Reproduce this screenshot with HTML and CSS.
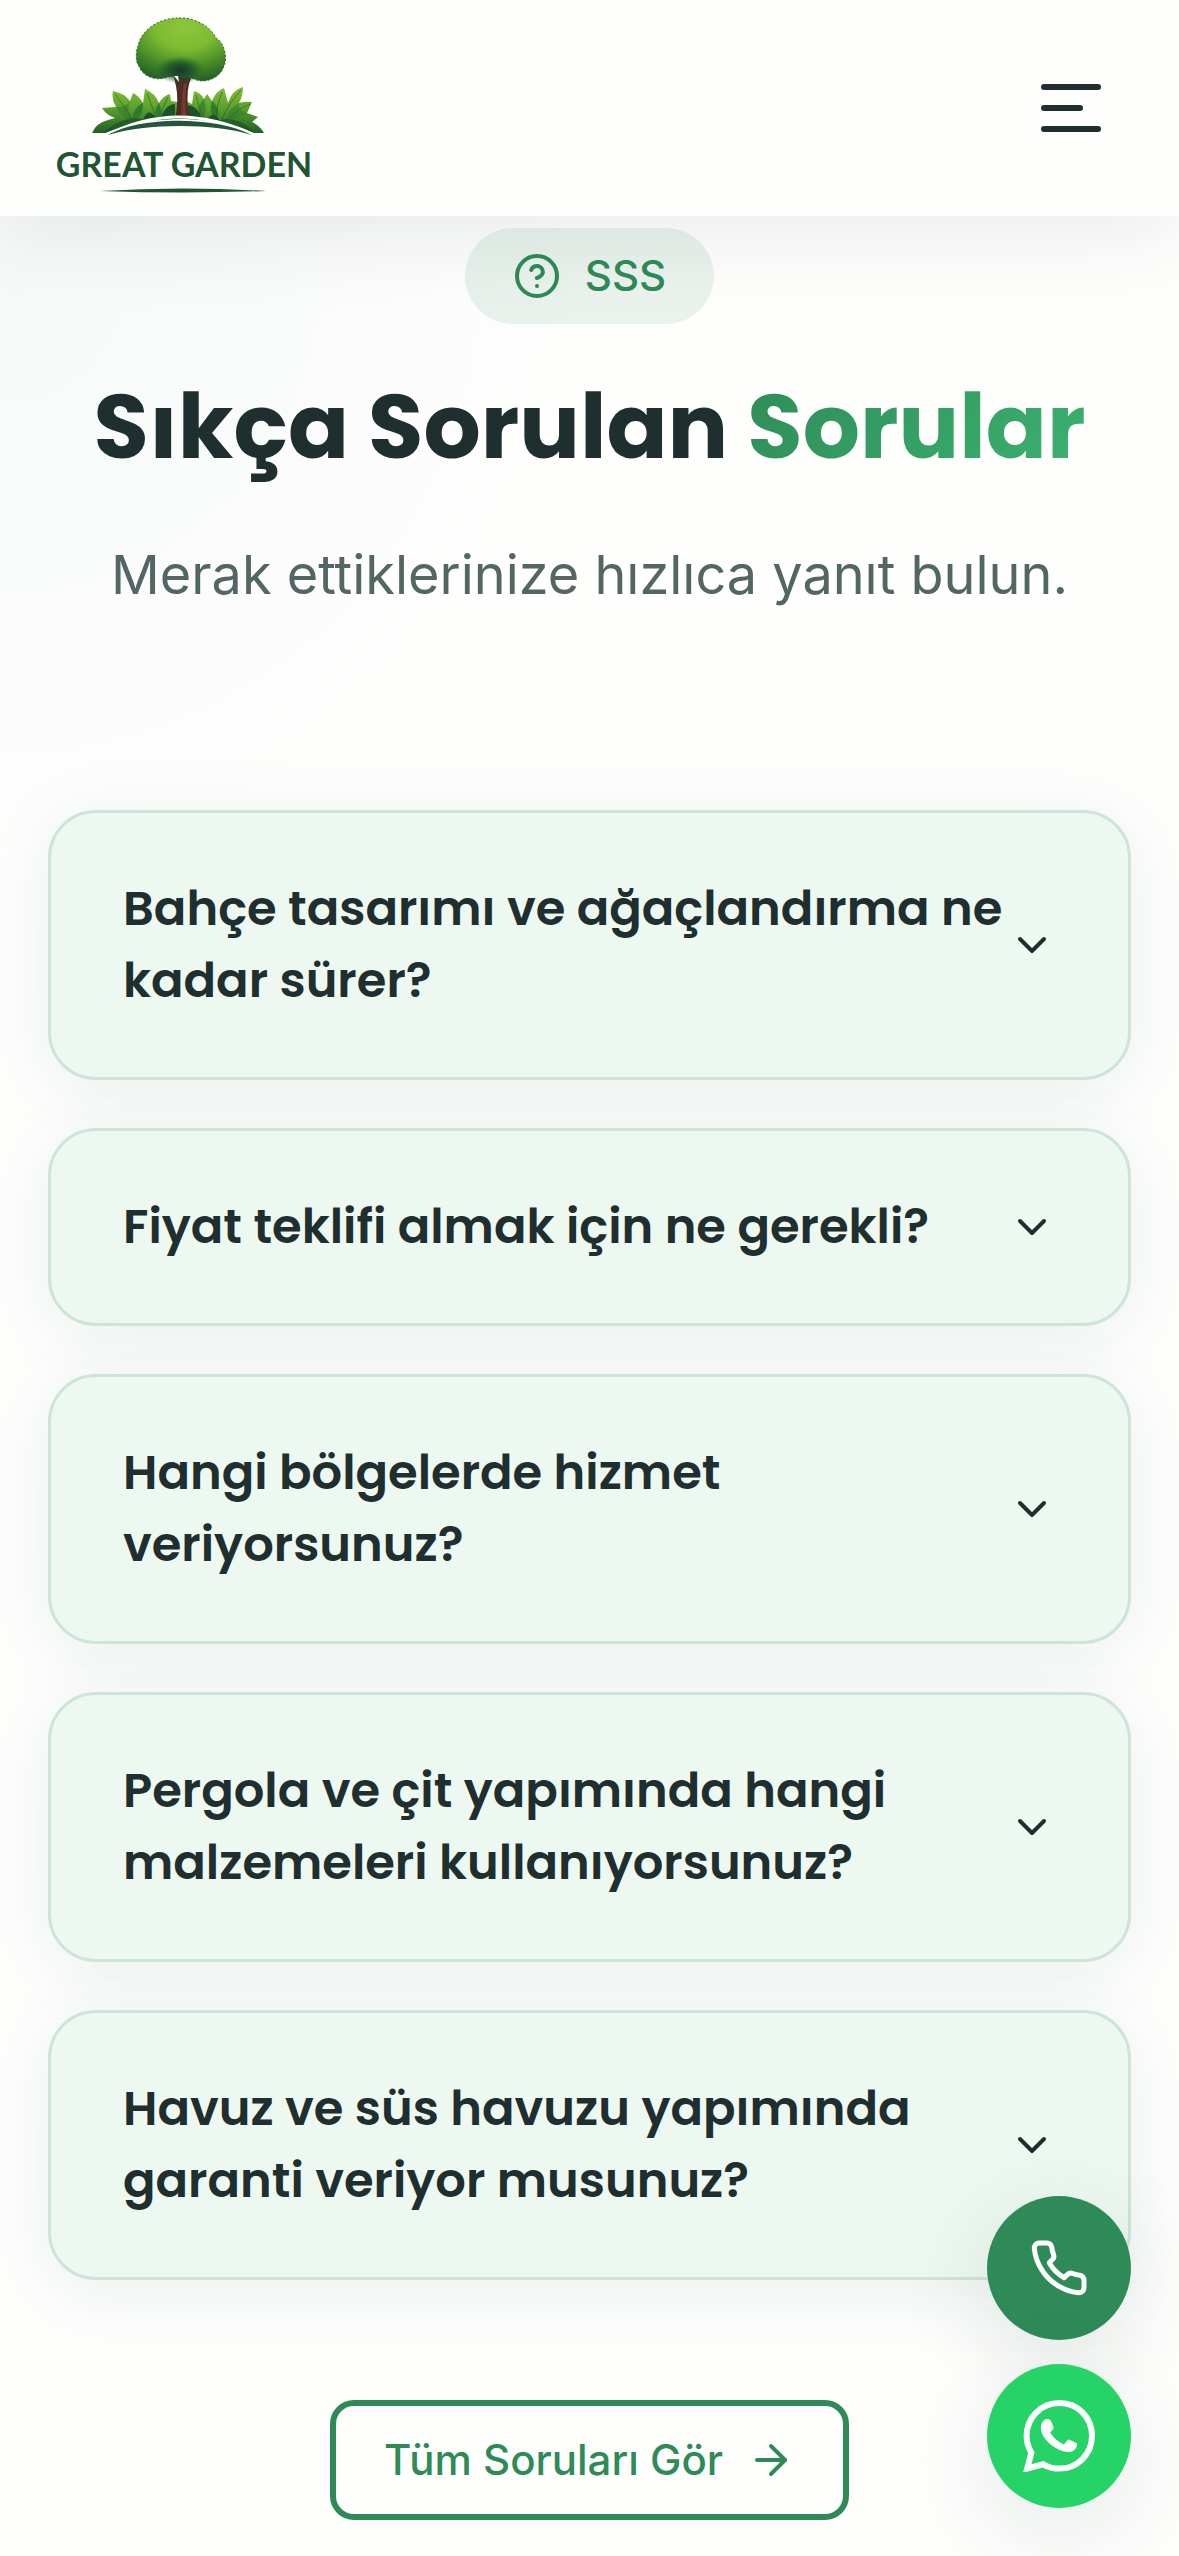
FILE: index.html
```html
<!DOCTYPE html>
<html lang="tr">
<head>
<meta charset="utf-8">
<meta name="viewport" content="width=device-width, initial-scale=1">
<title>Great Garden – Sıkça Sorulan Sorular</title>
<link rel="stylesheet" href="styles.css">
</head>
<body>
<header class="site-header">
  <a class="logo" href="#" aria-label="Great Garden">
    <svg class="logo-art" viewBox="0 0 270 216" aria-hidden="true">
      <defs>
        <radialGradient id="crown" cx=".55" cy=".15" r=".9">
          <stop offset="0" stop-color="#8cc63a"/><stop offset=".38" stop-color="#7dbb31"/>
          <stop offset=".65" stop-color="#4f9429"/><stop offset="1" stop-color="#1d5a26"/>
        </radialGradient>
        <radialGradient id="shade">
          <stop offset="0" stop-color="#16342b"/><stop offset=".5" stop-color="#1b4a2a" stop-opacity=".75"/><stop offset="1" stop-color="#1d5a26" stop-opacity="0"/>
        </radialGradient>
        <linearGradient id="leaf" gradientUnits="userSpaceOnUse" x1="0" y1="88" x2="0" y2="134">
          <stop offset="0" stop-color="#7fbf38"/><stop offset=".45" stop-color="#5a9f2e"/><stop offset="1" stop-color="#1f5c28"/>
        </linearGradient>
      </defs>
      <path d="M44 133Q48 123 60 120L67 118Q58 115 54 108L68 107Q63 99 65 91 76 93 82 101L85 93Q91 96 95 103L97 89Q107 93 111 103 115 96 122 94L123 101 129 102H140L144 104 146 91Q153 93 156 99L159 94 164 101Q168 91 176 88L180 103Q184 90 195 87 195 96 191 103 197 101 204 102L199 113 210 117 204 122Q212 126 216 133L205 133Q170 118 131 119 94 118 57 133Z" fill="url(#leaf)"/>
      <g fill="#2f7a2b">
        <path d="M95 103Q84 108 85 121 95 118 95 103Z"/>
        <path d="M111 103Q104 112 110 121 116 113 111 103Z"/>
        <path d="M82 101Q78 110 85 121 73 118 68 107 77 108 82 101Z" opacity=".55"/>
        <path d="M164 101Q160 112 168 121 174 110 164 101Z"/>
        <path d="M156 99Q146 108 154 121 160 112 156 99Z" opacity=".7"/>
        <path d="M191 103Q178 110 178 122 190 118 199 113 190 111 191 103Z" opacity=".55"/>
      </g>
      <g fill="#1c5028">
        <path d="M95 120Q100 106 108 118L112 119Q118 104 127 104V119Z"/>
        <path d="M140 119V105Q150 106 154 119L160 118Q166 110 172 121Z"/>
        <path d="M57 131Q72 118 90 118L98 120Q74 124 57 133Z" opacity=".7"/>
        <path d="M205 131Q192 118 176 119L168 121Q190 125 205 133Z" opacity=".7"/>
      </g>
      <g fill="none" stroke="#1f5c28" stroke-width="1" opacity=".6">
        <path d="M67 94Q76 106 84 119M99 93Q104 106 108 118M120 97Q114 108 112 118M193 90Q180 104 174 119M174 92Q168 106 168 118M148 95Q150 108 156 118M202 104Q188 110 180 120"/>
      </g>
      <path d="M125 74 132 76Q138 80 146 71L141 84Q138 96 141 119H127Q131 100 128 86Z" fill="#4d2b26"/>
      <path d="M136 84Q132 102 134 118H139Q136 102 139 82Z" fill="#753a2b"/>
      <path d="M131 18C147 17 163 27 168 38 176 42 180 58 176 66 172 79 156 84 146 79 138 76 124 76 120 77 108 82 94 76 91 66 87 62 88 50 90 46 93 32 108 18 131 18Z" fill="url(#crown)" stroke="#2b6a28" stroke-width="1" stroke-dasharray="2 2"/>
      <ellipse cx="132" cy="70" rx="24" ry="14" fill="url(#shade)"/>
      <path d="M126 76 130 76 131 82Z" fill="#fff"/>
      <path d="M59 135Q95 117 131 117T207 135" fill="none" stroke="#fff" stroke-width="3"/>
      <path d="M60 135C92 116 168 116 204 135 166 123 98 123 60 135Z" fill="#24563a"/>
      <path d="M52 191Q135 186 218 191 135 194 52 191Z" fill="#1f5532"/>
      <text class="logo-text" x="136" y="177" text-anchor="middle">GREAT GARDEN</text>
    </svg>
  </a>
  <button class="menu-toggle" type="button" aria-label="Menü">
    <span class="bar"></span><span class="bar bar-short"></span><span class="bar"></span>
  </button>
</header>

<main class="faq">
  <div class="faq-head">
    <span class="badge">
      <svg class="icon" viewBox="0 0 24 24" aria-hidden="true"><circle cx="12" cy="12" r="10"/><path d="M9.090 9a3 3 0 0 1 5.830 1c0 2-3 3-3 3"/><path d="M12 17h.01"/></svg>
      SSS
    </span>
    <h1 class="title">Sıkça Sorulan <span class="accent">Sorular</span></h1>
    <p class="subtitle">Merak ettiklerinize hızlıca yanıt bulun.</p>
  </div>

  <div class="faq-list">
    <button class="faq-item" type="button" aria-expanded="false">
      <span class="question">Bahçe tasarımı ve ağaçlandırma ne kadar sürer?</span>
      <svg class="icon" viewBox="0 0 24 24" aria-hidden="true"><path d="m6 9 6 6 6-6"/></svg>
    </button>
    <button class="faq-item" type="button" aria-expanded="false">
      <span class="question">Fiyat teklifi almak için ne gerekli?</span>
      <svg class="icon" viewBox="0 0 24 24" aria-hidden="true"><path d="m6 9 6 6 6-6"/></svg>
    </button>
    <button class="faq-item" type="button" aria-expanded="false">
      <span class="question">Hangi bölgelerde hizmet veriyorsunuz?</span>
      <svg class="icon" viewBox="0 0 24 24" aria-hidden="true"><path d="m6 9 6 6 6-6"/></svg>
    </button>
    <button class="faq-item" type="button" aria-expanded="false">
      <span class="question">Pergola ve çit yapımında hangi malzemeleri kullanıyorsunuz?</span>
      <svg class="icon" viewBox="0 0 24 24" aria-hidden="true"><path d="m6 9 6 6 6-6"/></svg>
    </button>
    <button class="faq-item" type="button" aria-expanded="false">
      <span class="question">Havuz ve süs havuzu yapımında garanti veriyor musunuz?</span>
      <svg class="icon" viewBox="0 0 24 24" aria-hidden="true"><path d="m6 9 6 6 6-6"/></svg>
    </button>
  </div>

  <a class="all-link" href="#">
    Tüm Soruları Gör
    <svg class="icon" viewBox="0 0 24 24" aria-hidden="true"><path d="M5 12h14"/><path d="m12 5 7 7-7 7"/></svg>
  </a>
</main>

<div class="contact-fabs">
  <a class="fab fab-phone" href="tel:" aria-label="Telefon">
    <svg class="icon icon-phone" viewBox="0 0 24 24" aria-hidden="true"><path d="M22 16.920v3a2 2 0 0 1-2.180 2 19.790 19.790 0 0 1-8.630-3.070 19.500 19.500 0 0 1-6-6 19.790 19.790 0 0 1-3.070-8.670A2 2 0 0 1 4.110 2h3a2 2 0 0 1 2 1.720 12.840 12.840 0 0 0 .7 2.810 2 2 0 0 1-.45 2.110L8.090 9.910a16 16 0 0 0 6 6l1.270-1.270a2 2 0 0 1 2.110-.45 12.840 12.840 0 0 0 2.810.7A2 2 0 0 1 22 16.920z"/></svg>
  </a>
  <a class="fab fab-whatsapp" href="#" aria-label="WhatsApp">
    <svg class="icon-whatsapp" viewBox="0 0 72 72" aria-hidden="true">
      <path d="M36.400 3C55 3 69 17.500 69 35.800 69 54 54.500 68.600 36.400 68.600 30.600 68.600 25 67.100 20.200 64.300L4.200 68.500 8.400 52.800C5.300 47.700 3.600 41.900 3.600 35.800 3.600 17.500 18.200 3 36.400 3Z" fill="none" stroke="#fff" stroke-width="6"/>
      <path d="M24 19C26.500 19 27.500 20 28.200 21.500L30.500 27C31 28.500 30 29.500 27.200 32.500 30.300 37.500 35 42 41 44.400L44.500 40.200C45.200 39.400 46 39.500 46.800 39.900L53 42.800C54.300 43.400 54.400 44.500 53.800 46.300 52.500 50.500 48.500 52.300 44.500 52 33 50.600 22 41.500 18.800 33 16.800 26.500 18.500 19.500 24 19Z" fill="#fff"/>
    </svg>
  </a>
</div>
</body>
</html>
```
FILE: styles.css
```css
* { box-sizing: border-box; }

:root {
  --ink: #1f2e2e;
  --muted: #526664;
  --green: #2e8b57;
  --paper: #fefefd;
  --body-font: Inter, "Open Sans", sans-serif;
  --heading-font: Poppins, Inter, "Open Sans", sans-serif;
}

body {
  margin: 0;
  min-height: 100vh;
  color: var(--ink);
  background: var(--paper);
  font-family: var(--body-font);
  font-size: 42px;
}

a { color: inherit; text-decoration: none; }
button { font: inherit; color: inherit; border: 0; background: none; cursor: pointer; }

.icon {
  flex: none;
  width: 48px;
  height: 48px;
  fill: none;
  stroke: currentColor;
  stroke-width: 2;
  stroke-linecap: round;
  stroke-linejoin: round;
}

/* Header */
.site-header {
  position: sticky;
  top: 0;
  z-index: 2;
  display: flex;
  align-items: center;
  justify-content: space-between;
  height: 216px;
  padding: 0 48px;
  background: var(--paper);
  box-shadow: 0 12px 90px rgba(31, 46, 46, .1);
}
.logo { display: block; }
.logo-art { display: block; width: 270px; height: 216px; }
.logo-text { font-family: Lato, "Open Sans", sans-serif; font-size: 34px; font-weight: 700; fill: #1f5532; }

.menu-toggle {
  display: flex;
  flex-direction: column;
  gap: 15px;
  padding: 30px;
}
.bar { width: 60px; height: 6px; border-radius: 3px; background: var(--ink); }
.bar-short { width: 42px; }

/* FAQ section */
.faq {
  display: flex;
  flex-direction: column;
  align-items: center;
  padding: 12px 48px 36px;
  background:
    radial-gradient(circle 600px at 0 60px, rgba(46, 139, 120, .04), rgba(46, 139, 120, 0)),
    var(--paper);
}
.faq-head {
  display: flex;
  flex-direction: column;
  align-items: center;
  text-align: center;
}
.badge {
  display: flex;
  align-items: center;
  gap: 24px;
  padding: 24px 48px;
  border-radius: 48px;
  background: rgba(46, 139, 87, .1);
  color: var(--green);
  font-weight: 500;
  line-height: 48px;
}
.title {
  margin: 48px 0;
  font-family: var(--heading-font);
  font-size: 90px;
  font-weight: 700;
  line-height: 110px;
}
.accent {
  background: linear-gradient(135deg, #2e8b57, #3cb371);
  -webkit-background-clip: text;
  background-clip: text;
  color: transparent;
}
.subtitle {
  margin: 0;
  color: var(--muted);
  font-size: 54px;
  line-height: 90px;
}

.faq-list {
  display: flex;
  flex-direction: column;
  gap: 48px;
  width: 100%;
  margin: 190px 0 120px;
}
.faq-item {
  display: flex;
  align-items: center;
  justify-content: space-between;
  width: 100%;
  padding: 60px 72px;
  border: 3px solid #cfe4d8;
  border-radius: 48px;
  background: #edf8f0;
  box-shadow: 0 12px 72px rgba(31, 100, 90, .09);
  font-family: var(--heading-font);
  font-size: 48px;
  font-weight: 600;
  line-height: 72px;
  text-align: left;
}

.all-link {
  display: flex;
  align-items: center;
  gap: 24px;
  padding: 30px 48px;
  border: 6px solid var(--green);
  border-radius: 24px;
  color: var(--green);
  font-weight: 500;
  line-height: 48px;
}

/* Floating contact buttons */
.contact-fabs {
  position: fixed;
  right: 48px;
  bottom: 48px;
  z-index: 3;
  display: flex;
  flex-direction: column;
  gap: 24px;
}
.fab {
  display: grid;
  place-items: center;
  width: 144px;
  height: 144px;
  border-radius: 50%;
  color: #fff;
  box-shadow: 0 24px 96px rgba(31, 80, 60, .12);
}
.fab-phone { background: var(--green); }
.fab-whatsapp { background: #25d366; }
.icon-phone { width: 60px; height: 60px; }
.icon-whatsapp { width: 72px; height: 72px; }
```
